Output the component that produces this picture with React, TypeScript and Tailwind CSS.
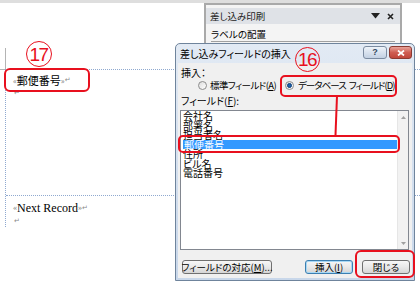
import React from "react";

function RedBox({ className }: { className: string }) {
  return <div className={"absolute border-2 border-[#e8101e] " + className} />;
}

function Circled({ n, className }: { n: string; className: string }) {
  return (
    <div
      className={
        "absolute rounded-full border-[1.5px] border-[#e8101e] flex items-center justify-center text-[#e8101e] font-['Liberation_Sans',sans-serif] text-[19px] leading-none tracking-[-1.5px] " +
        className
      }
    >
      <span className="-ml-[1px]">{n}</span>
    </div>
  );
}

function Radio({ checked }: { checked?: boolean }) {
  return (
    <div className="w-[9px] h-[9px] rounded-full border border-[#8c8c8c] bg-gradient-to-br from-[#dcdcdc] to-white flex items-center justify-center shrink-0">
      {checked && <div className="w-[5px] h-[5px] rounded-full bg-[#1e63ad] border border-[#0d3f78]" />}
    </div>
  );
}

const btn =
  "h-[14px] border border-[#707070] rounded-[3px] bg-gradient-to-b from-[#f7f7f7] via-[#e9e9e9] to-[#d5d5d5] flex items-center justify-center text-[9.5px] leading-[12px] whitespace-nowrap";

export default function App() {
  return (
    <div className="relative w-[420px] h-[282px] overflow-hidden bg-white text-black font-['Noto_Sans_CJK_JP',sans-serif]">
      {/* document */}
      <div className="h-[3px] bg-[#dedede]" />
      <div className="ml-[5px] mt-[45px] w-px h-[21px] bg-[#b4b4b4]" />
      <div className="flex">
        <div className="w-[5px]">
          <div className="h-px bg-[#b4b4b4]" />
        </div>
        <div className="flex-1 border-l border-t border-dotted border-[#8fa9d0]">
          <div className="h-[126px] border-b border-dotted border-[#8fa9d0] pl-[7px] pt-[4px]">
            <div className="flex items-center h-[13px] leading-[13px]">
              <span className="text-[8px] text-[#7a7a7a]">«</span>
              <span className="text-[11px]">郵便番号</span>
              <span className="text-[8px] text-[#7a7a7a]">»</span>
              <span className="text-[7px] text-[#8a8a8a] font-['DejaVu_Sans',sans-serif]">↵</span>
            </div>
            <div className="h-[12px] leading-[12px] text-[7px] text-[#8a8a8a] font-['DejaVu_Sans',sans-serif] pl-[1px]">↵</div>
          </div>
          <div className="pl-[7px] pt-[5px]">
            <div className="flex items-center h-[14px] leading-[14px] font-['Liberation_Serif',serif]">
              <span className="text-[8px] text-[#7a7a7a]">«</span>
              <span className="text-[12px]">Next Record</span>
              <span className="text-[8px] text-[#7a7a7a]">»</span>
              <span className="text-[7px] text-[#8a8a8a] font-['DejaVu_Sans',sans-serif]">↵</span>
            </div>
            <div className="h-[12px] leading-[12px] text-[7px] text-[#8a8a8a] font-['DejaVu_Sans',sans-serif] pl-[1px]">↵</div>
          </div>
        </div>
      </div>

      {/* task pane */}
      <div className="absolute left-[204px] top-[3px] w-[198px] h-[60px] border-2 border-[#a9a9a9] bg-[#f4f4f4] pt-[3px]">
        <div className="h-[16px] bg-[#dfe2e7] flex items-center pl-[4px] pr-[6px]">
          <span className="text-[9.5px] leading-[12px] text-[#222] [font-feature-settings:'palt']">差し込み印刷</span>
          <svg className="ml-auto" width="9" height="6" viewBox="0 0 9 6">
            <polygon points="0,0 9,0 4.5,5.5" fill="#222" />
          </svg>
          <svg className="ml-[7px]" width="7" height="7" viewBox="0 0 7 7">
            <path d="M1 1 L6 6 M6 1 L1 6" stroke="#222" strokeWidth="1.6" />
          </svg>
        </div>
        <div className="mx-[5px] mt-[4px] border-b border-[#a0a0a0] text-[9.5px] leading-[12px] pb-[1px] [font-feature-settings:'palt']">
          ラベルの配置
        </div>
      </div>

      {/* dialog */}
      <div className="absolute left-[175px] top-[43px] w-[240px] h-[238px] rounded-t-[5px] border border-[#6f849c] bg-gradient-to-b from-[#e2eaf4] to-[#c8d7ea] flex flex-col px-[2px] pb-[2px]">
        <div className="h-[19px] flex items-start shrink-0">
          <span className="pl-[2px] mt-[4px] text-[10px] leading-[12px] [font-feature-settings:'palt']">差し込みフィールドの挿入</span>
          <div className="ml-auto mt-[2px] flex gap-[2px]">
            <div className="w-[24px] h-[13px] rounded-[3px] border border-[#7b8ba0] bg-gradient-to-b from-[#eef3f9] to-[#c3d1e3] flex items-center justify-center text-[9px] font-bold text-[#33475f] leading-none font-['Liberation_Sans',sans-serif]">
              ?
            </div>
            <div className="w-[23px] h-[13px] rounded-[3px] border border-[#8b3a32] bg-gradient-to-b from-[#e7a39b] via-[#cf5d52] to-[#c0463b] flex items-center justify-center">
              <svg width="8" height="6" viewBox="0 0 8 6">
                <path d="M1 0.5 L7 5.5 M7 0.5 L1 5.5" stroke="white" strokeWidth="1.7" />
              </svg>
            </div>
          </div>
        </div>
        <div className="flex-1 bg-[#f0f0f0] flex flex-col text-[10px] [font-feature-settings:'palt']">
          <div className="pl-[3px] pt-[4px] h-[16px] leading-[12px]">挿入：</div>
          <div className="flex items-center h-[12px] pl-[20px]">
            <div className="flex items-center gap-[3px] w-[87px]">
              <Radio />
              <span className="leading-[12px] whitespace-nowrap text-[9.5px] tracking-[-0.6px]">
                標準フィールド(<span className="underline">A</span>)
              </span>
            </div>
            <div className="flex items-center gap-[4px]">
              <Radio checked />
              <span className="leading-[12px] whitespace-nowrap text-[9.5px] tracking-[-1px]">
                データベース<span className="ml-[3px]">フィールド(<span className="underline">D</span>)</span>
              </span>
            </div>
          </div>
          <div className="pl-[3px] mt-[4px] h-[12px] leading-[12px]">
            フィールド(<span className="underline">F</span>):
          </div>
          <div className="ml-[2px] mr-[3px] mt-[3px] h-[140px] border border-[#828790] bg-white flex shrink-0">
            <div className="flex-1 pl-[2px] text-[10px] leading-[9.5px]">
              <div className="h-[9.5px]">会社名</div>
              <div className="h-[9.5px]">部署名</div>
              <div className="h-[9.5px]">担当者名</div>
              <div className="h-[9.5px] bg-[#3399ff] text-white pl-[1px] leading-[10px]">郵便番号</div>
              <div className="h-[9.5px]">住所</div>
              <div className="h-[9.5px]">ビル名</div>
              <div className="h-[9.5px]">電話番号</div>
            </div>
            <div className="w-[11px] bg-[#f2f2f2] border-l border-[#e6e6e6] flex flex-col items-center justify-between pt-[5px] pb-[4px]">
              <svg width="5" height="3" viewBox="0 0 5 3">
                <polygon points="0,3 5,3 2.5,0" fill="#a0a0a0" />
              </svg>
              <svg width="5" height="3" viewBox="0 0 5 3">
                <polygon points="0,0 5,0 2.5,3" fill="#a0a0a0" />
              </svg>
            </div>
          </div>
          <div className="flex mt-[10px] pl-[4px] pr-[2px]">
            <div className={btn + " w-[90px]"}>
              フィールドの対応(<span className="underline">M</span>)...
            </div>
            <div className={btn + " ml-auto w-[48px] !border-[#3c7fb1] shadow-[inset_0_0_0_1px_#a8d8f4]"}>
              挿入(<span className="underline">I</span>)
            </div>
            <div className={btn + " ml-[9px] w-[48px]"}>閉じる</div>
          </div>
        </div>
      </div>

      {/* annotations */}
      <RedBox className="left-[4px] top-[68px] w-[86px] h-[24px] rounded-[6px]" />
      <RedBox className="left-[280px] top-[75px] w-[117px] h-[22px] rounded-[5px]" />
      <RedBox className="left-[178px] top-[135px] w-[222px] h-[18px] rounded-[5px]" />
      <RedBox className="left-[355px] top-[250px] w-[60px] h-[28px] rounded-[6px]" />
      <svg className="absolute left-[330px] top-[96px]" width="12" height="40" viewBox="0 0 12 40">
        <path d="M7 0 L5.5 39" stroke="#e8101e" strokeWidth="2" fill="none" />
      </svg>
      <Circled n="17" className="left-[26px] top-[41px] w-[26px] h-[26px]" />
      <Circled n="16" className="left-[295px] top-[47px] w-[25px] h-[25px]" />
    </div>
  );
}
